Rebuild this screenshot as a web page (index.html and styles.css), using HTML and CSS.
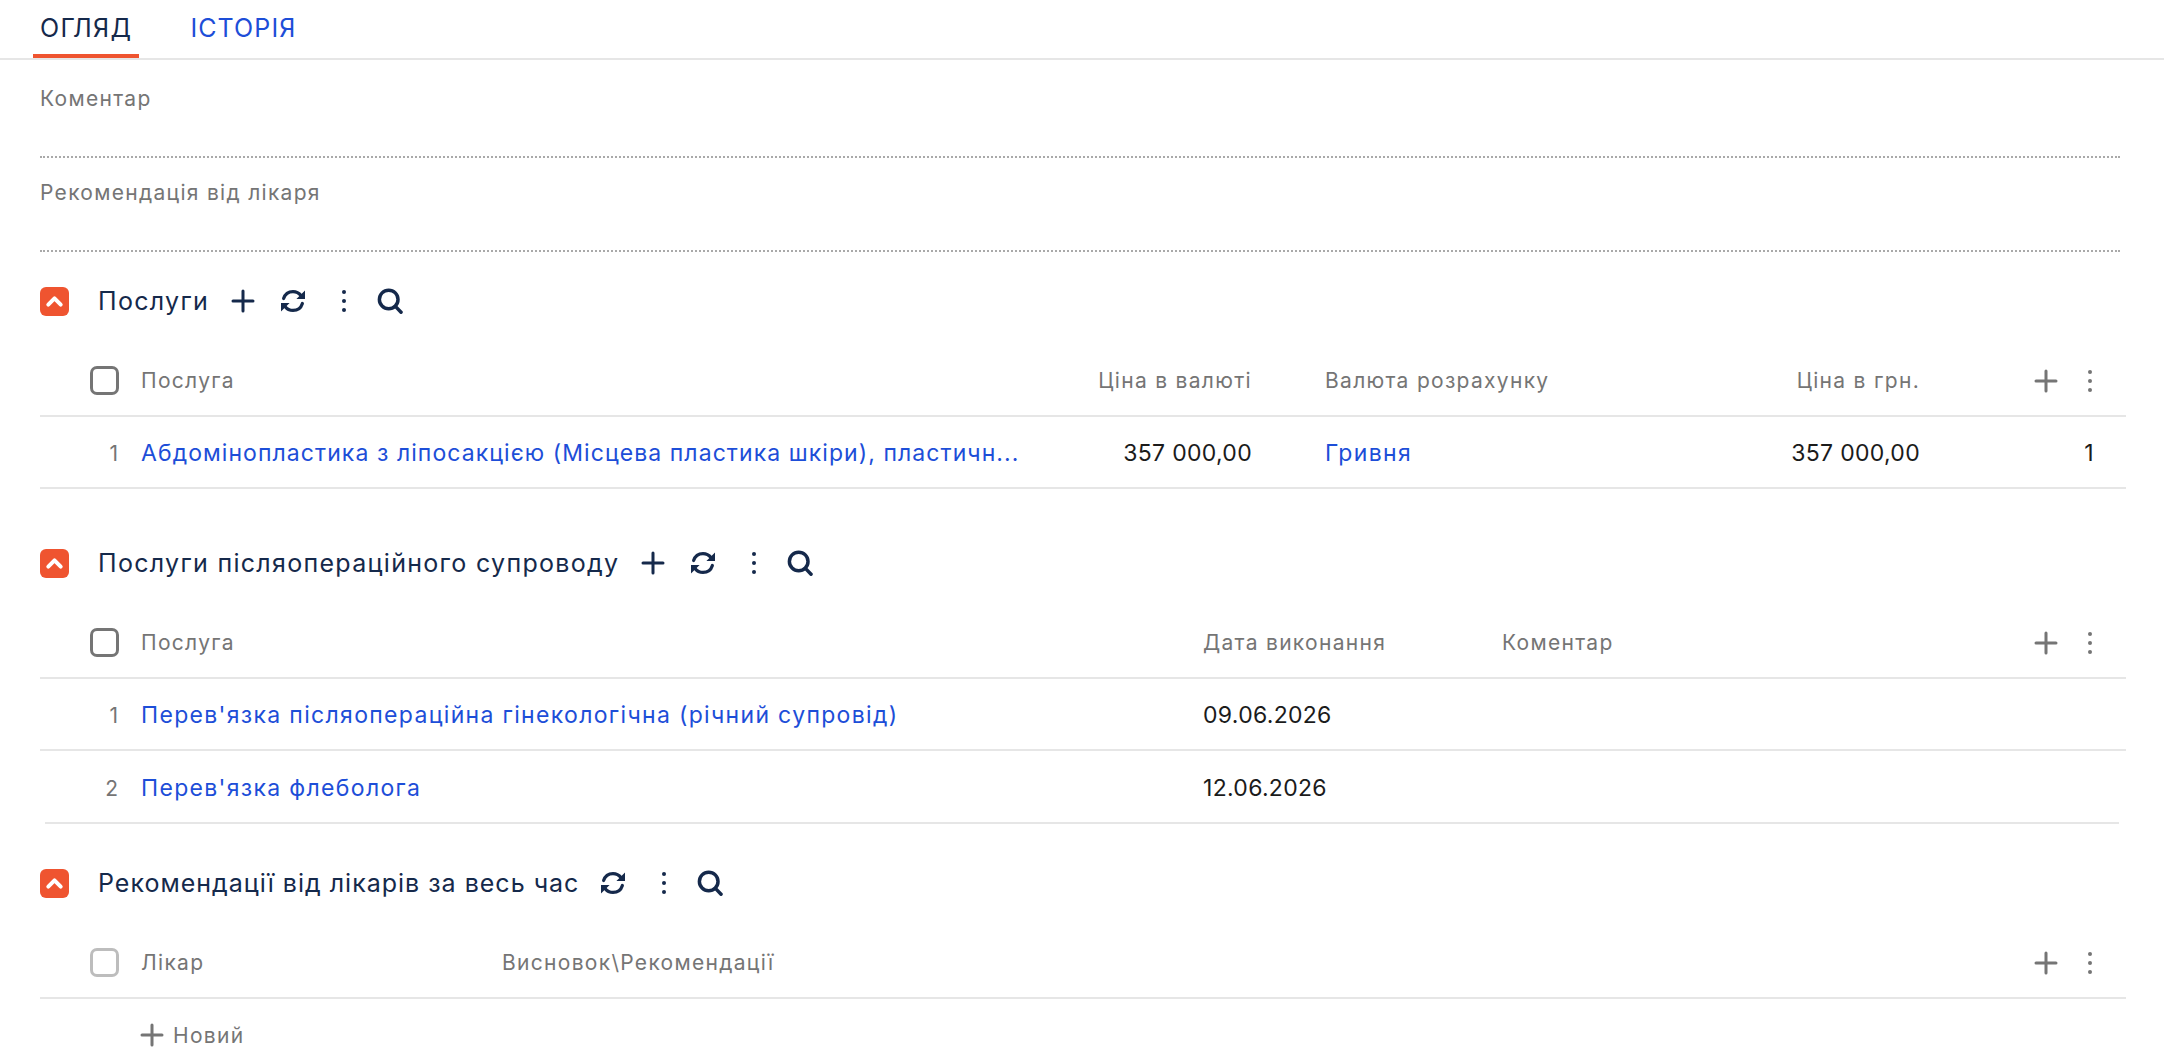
FILE: index.html
```html
<!DOCTYPE html>
<html lang="uk">
<head>
<meta charset="utf-8">
<title>Огляд</title>
<link rel="stylesheet" href="styles.css">
</head>
<body>
<svg width="0" height="0" class="defs">
  <defs>
    <symbol id="i-plus" viewBox="0 0 24 24"><path d="M12 2v20M2 12h20" fill="none" stroke="currentColor" stroke-width="3" stroke-linecap="round"/></symbol>
    <symbol id="i-dots" viewBox="0 0 24 24"><circle cx="12" cy="3" r="2"/><circle cx="12" cy="12" r="2"/><circle cx="12" cy="21" r="2"/></symbol>
    <symbol id="i-search" viewBox="0 0 24 24"><circle cx="10.8" cy="10.6" r="8.6" fill="none" stroke="currentColor" stroke-width="3.2"/><path d="M17 17l5.2 5.4" fill="none" stroke="currentColor" stroke-width="3.2" stroke-linecap="round"/></symbol>
    <symbol id="i-sync" viewBox="0 0 24 24"><path d="M2.6 9.6C4 5.2 7.6 2.6 12 2.6c3.4 0 6 1.4 8 4M21.4 14.4C20 18.800 16.400 21.400 12 21.400c-3.400 0-6-1.400-8-4" fill="none" stroke="currentColor" stroke-width="3.2" stroke-linecap="round"/><path d="M24 1.400v8.600h-8.600zM0 22.600v-8.600h8.600z"/></symbol>
    <symbol id="i-up" viewBox="0 0 28 28"><path d="M8 17l6-6 6 6" fill="none" stroke="#fff" stroke-width="3.8" stroke-linecap="round" stroke-linejoin="round"/></symbol>
  </defs>
</svg>
<nav class="tabs">
  <a class="tab tab-active">ОГЛЯД</a>
  <a class="tab tab-link">ІСТОРІЯ</a>
</nav>
<main class="content">
  <div class="field field-first"><div class="field-label">Коментар</div></div>
  <div class="field"><div class="field-label">Рекомендація від лікаря</div></div>

  <section class="group group-services">
    <header class="group-head">
      <span class="toggle"><svg><use href="#i-up"/></svg></span>
      <h2 class="group-title">Послуги</h2>
      <span class="tools">
        <svg class="ic ic-plus"><use href="#i-plus"/></svg>
        <svg class="ic ic-sync"><use href="#i-sync"/></svg>
        <svg class="ic ic-dots"><use href="#i-dots"/></svg>
        <svg class="ic ic-search"><use href="#i-search"/></svg>
      </span>
    </header>
    <div class="row head cols-a">
      <span class="num"><span class="check"></span></span>
      <span class="cell">Послуга</span>
      <span class="cell right">Ціна в валюті</span>
      <span class="cell pad-wide">Валюта розрахунку</span>
      <span class="cell right">Ціна в грн.</span>
      <span class="row-tools"><svg class="ic-g ic-gplus"><use href="#i-plus"/></svg><svg class="ic-g ic-gdots"><use href="#i-dots"/></svg></span>
    </div>
    <div class="row body cols-a">
      <span class="num">1</span>
      <a class="cell link">Абдомінопластика з ліпосакцією (Місцева пластика шкіри), пластичн...</a>
      <span class="cell right dark">357 000,00</span>
      <a class="cell link pad-wide link-wide">Гривня</a>
      <span class="cell right dark">357 000,00</span>
      <span class="row-tools qty dark">1</span>
    </div>
  </section>

  <section class="group group-post">
    <header class="group-head">
      <span class="toggle"><svg><use href="#i-up"/></svg></span>
      <h2 class="group-title">Послуги післяопераційного супроводу</h2>
      <span class="tools">
        <svg class="ic ic-plus"><use href="#i-plus"/></svg>
        <svg class="ic ic-sync"><use href="#i-sync"/></svg>
        <svg class="ic ic-dots"><use href="#i-dots"/></svg>
        <svg class="ic ic-search"><use href="#i-search"/></svg>
      </span>
    </header>
    <div class="row head cols-b">
      <span class="num"><span class="check"></span></span>
      <span class="cell">Послуга</span>
      <span class="cell">Дата виконання</span>
      <span class="cell">Коментар</span>
      <span class="row-tools"><svg class="ic-g ic-gplus"><use href="#i-plus"/></svg><svg class="ic-g ic-gdots"><use href="#i-dots"/></svg></span>
    </div>
    <div class="row body cols-b">
      <span class="num">1</span>
      <a class="cell link link-wide">Перев'язка післяопераційна гінекологічна (річний супровід)</a>
      <span class="cell dark">09.06.2026</span>
      <span class="cell"></span>
      <span class="row-tools"></span>
    </div>
    <div class="row body cols-b inset-line">
      <span class="num">2</span>
      <a class="cell link link-wide">Перев'язка флеболога</a>
      <span class="cell dark">12.06.2026</span>
      <span class="cell"></span>
      <span class="row-tools"></span>
    </div>
  </section>

  <section class="group group-recs">
    <header class="group-head">
      <span class="toggle"><svg><use href="#i-up"/></svg></span>
      <h2 class="group-title title-tight">Рекомендації від лікарів за весь час</h2>
      <span class="tools">
        <svg class="ic ic-sync"><use href="#i-sync"/></svg>
        <svg class="ic ic-dots"><use href="#i-dots"/></svg>
        <svg class="ic ic-search"><use href="#i-search"/></svg>
      </span>
    </header>
    <div class="row head cols-c">
      <span class="num"><span class="check check-light"></span></span>
      <span class="cell">Лікар</span>
      <span class="cell">Висновок\Рекомендації</span>
      <span class="row-tools"><svg class="ic-g ic-gplus"><use href="#i-plus"/></svg><svg class="ic-g ic-gdots"><use href="#i-dots"/></svg></span>
    </div>
    <div class="new-row"><svg class="ic-g ic-new"><use href="#i-plus"/></svg><span>Новий</span></div>
  </section>
</main>
</body>
</html>
```

FILE: styles.css
```css
* { box-sizing: border-box; }
html, body { margin: 0; height: 1050px; overflow: hidden; background: #fff; }
body {
  font-family: "Inter", "Noto Sans", "Liberation Sans", sans-serif;
  font-size: 21px;
  letter-spacing: 1.3px;
  color: #757575;
}
.defs { position: absolute; }

.tabs {
  display: flex;
  gap: 44px;
  height: 60px;
  padding-left: 33px;
  border-bottom: 2px solid #e6e6e6;
}
.tab {
  height: 58px;
  padding: 13px 7px 0;
  font-size: 25px;
  letter-spacing: 1.4px;
  line-height: 30px;
}
.tab-link { color: #1d4ed8; letter-spacing: 1.1px; }
.tab-active {
  color: #15294b;
  border-bottom: 4px solid #ef5430;
}

.content { padding: 0 38px 0 40px; }

.field {
  height: 94px;
  margin-right: 6px;
  padding-top: 22px;
  border-bottom: 2px dotted #a9a9a9;
}
.field-first { height: 98px; padding-top: 26px; }
.field-label { line-height: 26px; }

.group-head {
  display: flex;
  align-items: center;
  height: 30px;
}
.toggle {
  width: 29px;
  height: 29px;
  border-radius: 6px;
  background: #ef5430;
  margin-right: 29px;
}
.toggle svg { display: block; width: 29px; height: 29px; }
.group-title {
  margin: 0;
  font-size: 25px;
  letter-spacing: 1.3px;
  font-weight: 400;
  color: #15294b;
  line-height: 30px;
}
.title-tight { letter-spacing: 1px; }
.tools { display: flex; align-items: center; color: #15294b; fill: #15294b; margin-left: 22px; }
.ic { display: block; }
.ic-plus { width: 24px; height: 24px; margin-right: 26px; }
.ic-sync { width: 24px; height: 24px; margin-right: 27px; }
.ic-dots { width: 24px; height: 24px; margin-right: 21px; }
.ic-search { width: 26px; height: 26px; }

.group-services { margin-top: 34px; }
.group-post { margin-top: 59px; }
.group-recs { margin-top: 45px; }

.row {
  display: grid;
  align-items: center;
  border-bottom: 2px solid #e6e6e6;
}
.head { margin-top: 30px; height: 71px; }
.body { height: 72px; padding-top: 2px; }
.body .cell, .body .qty { font-size: 23px; letter-spacing: 1.07px; }
.body .link-wide { letter-spacing: 1.32px; }
.body .dark { letter-spacing: 0.3px; }
.cols-a { grid-template-columns: 78px 922px 212px 389px 279px 1fr; }
.cols-b { grid-template-columns: 78px 1062px 299px 1fr 207px; }
.cols-c { grid-template-columns: 78px 361px 1fr 207px; }

.num { display: flex; justify-content: flex-end; letter-spacing: 0; }
.cell { padding-left: 23px; white-space: nowrap; }
.right { text-align: right; padding-left: 0; }
.pad-wide { padding-left: 73px; }
.dark { color: #1b1b1b; }
.link { color: #1d4ed8; }
.check {
  width: 29px;
  height: 29px;
  border: 3.5px solid #757575;
  border-radius: 7px;
  margin-right: -1px;
}
.check-light { border-color: #bdbdbd; }

.row-tools {
  display: flex;
  align-items: center;
  justify-content: flex-end;
  color: #757575;
  fill: #757575;
  padding-right: 24px;
}
.ic-gplus { width: 24px; height: 24px; margin-right: 20px; }
.ic-gdots { width: 24px; height: 24px; }
.qty { padding-right: 32px; color: #1b1b1b; }

.inset-line { border-bottom: 0; position: relative; }
.inset-line::after {
  content: "";
  position: absolute;
  left: 5px;
  right: 7px;
  bottom: -1px;
  height: 2px;
  background: #e6e6e6;
}

.new-row {
  display: flex;
  align-items: center;
  gap: 9px;
  height: 72px;
  padding-left: 100px;
}
.ic-new { width: 24px; height: 24px; color: #757575; }
```
